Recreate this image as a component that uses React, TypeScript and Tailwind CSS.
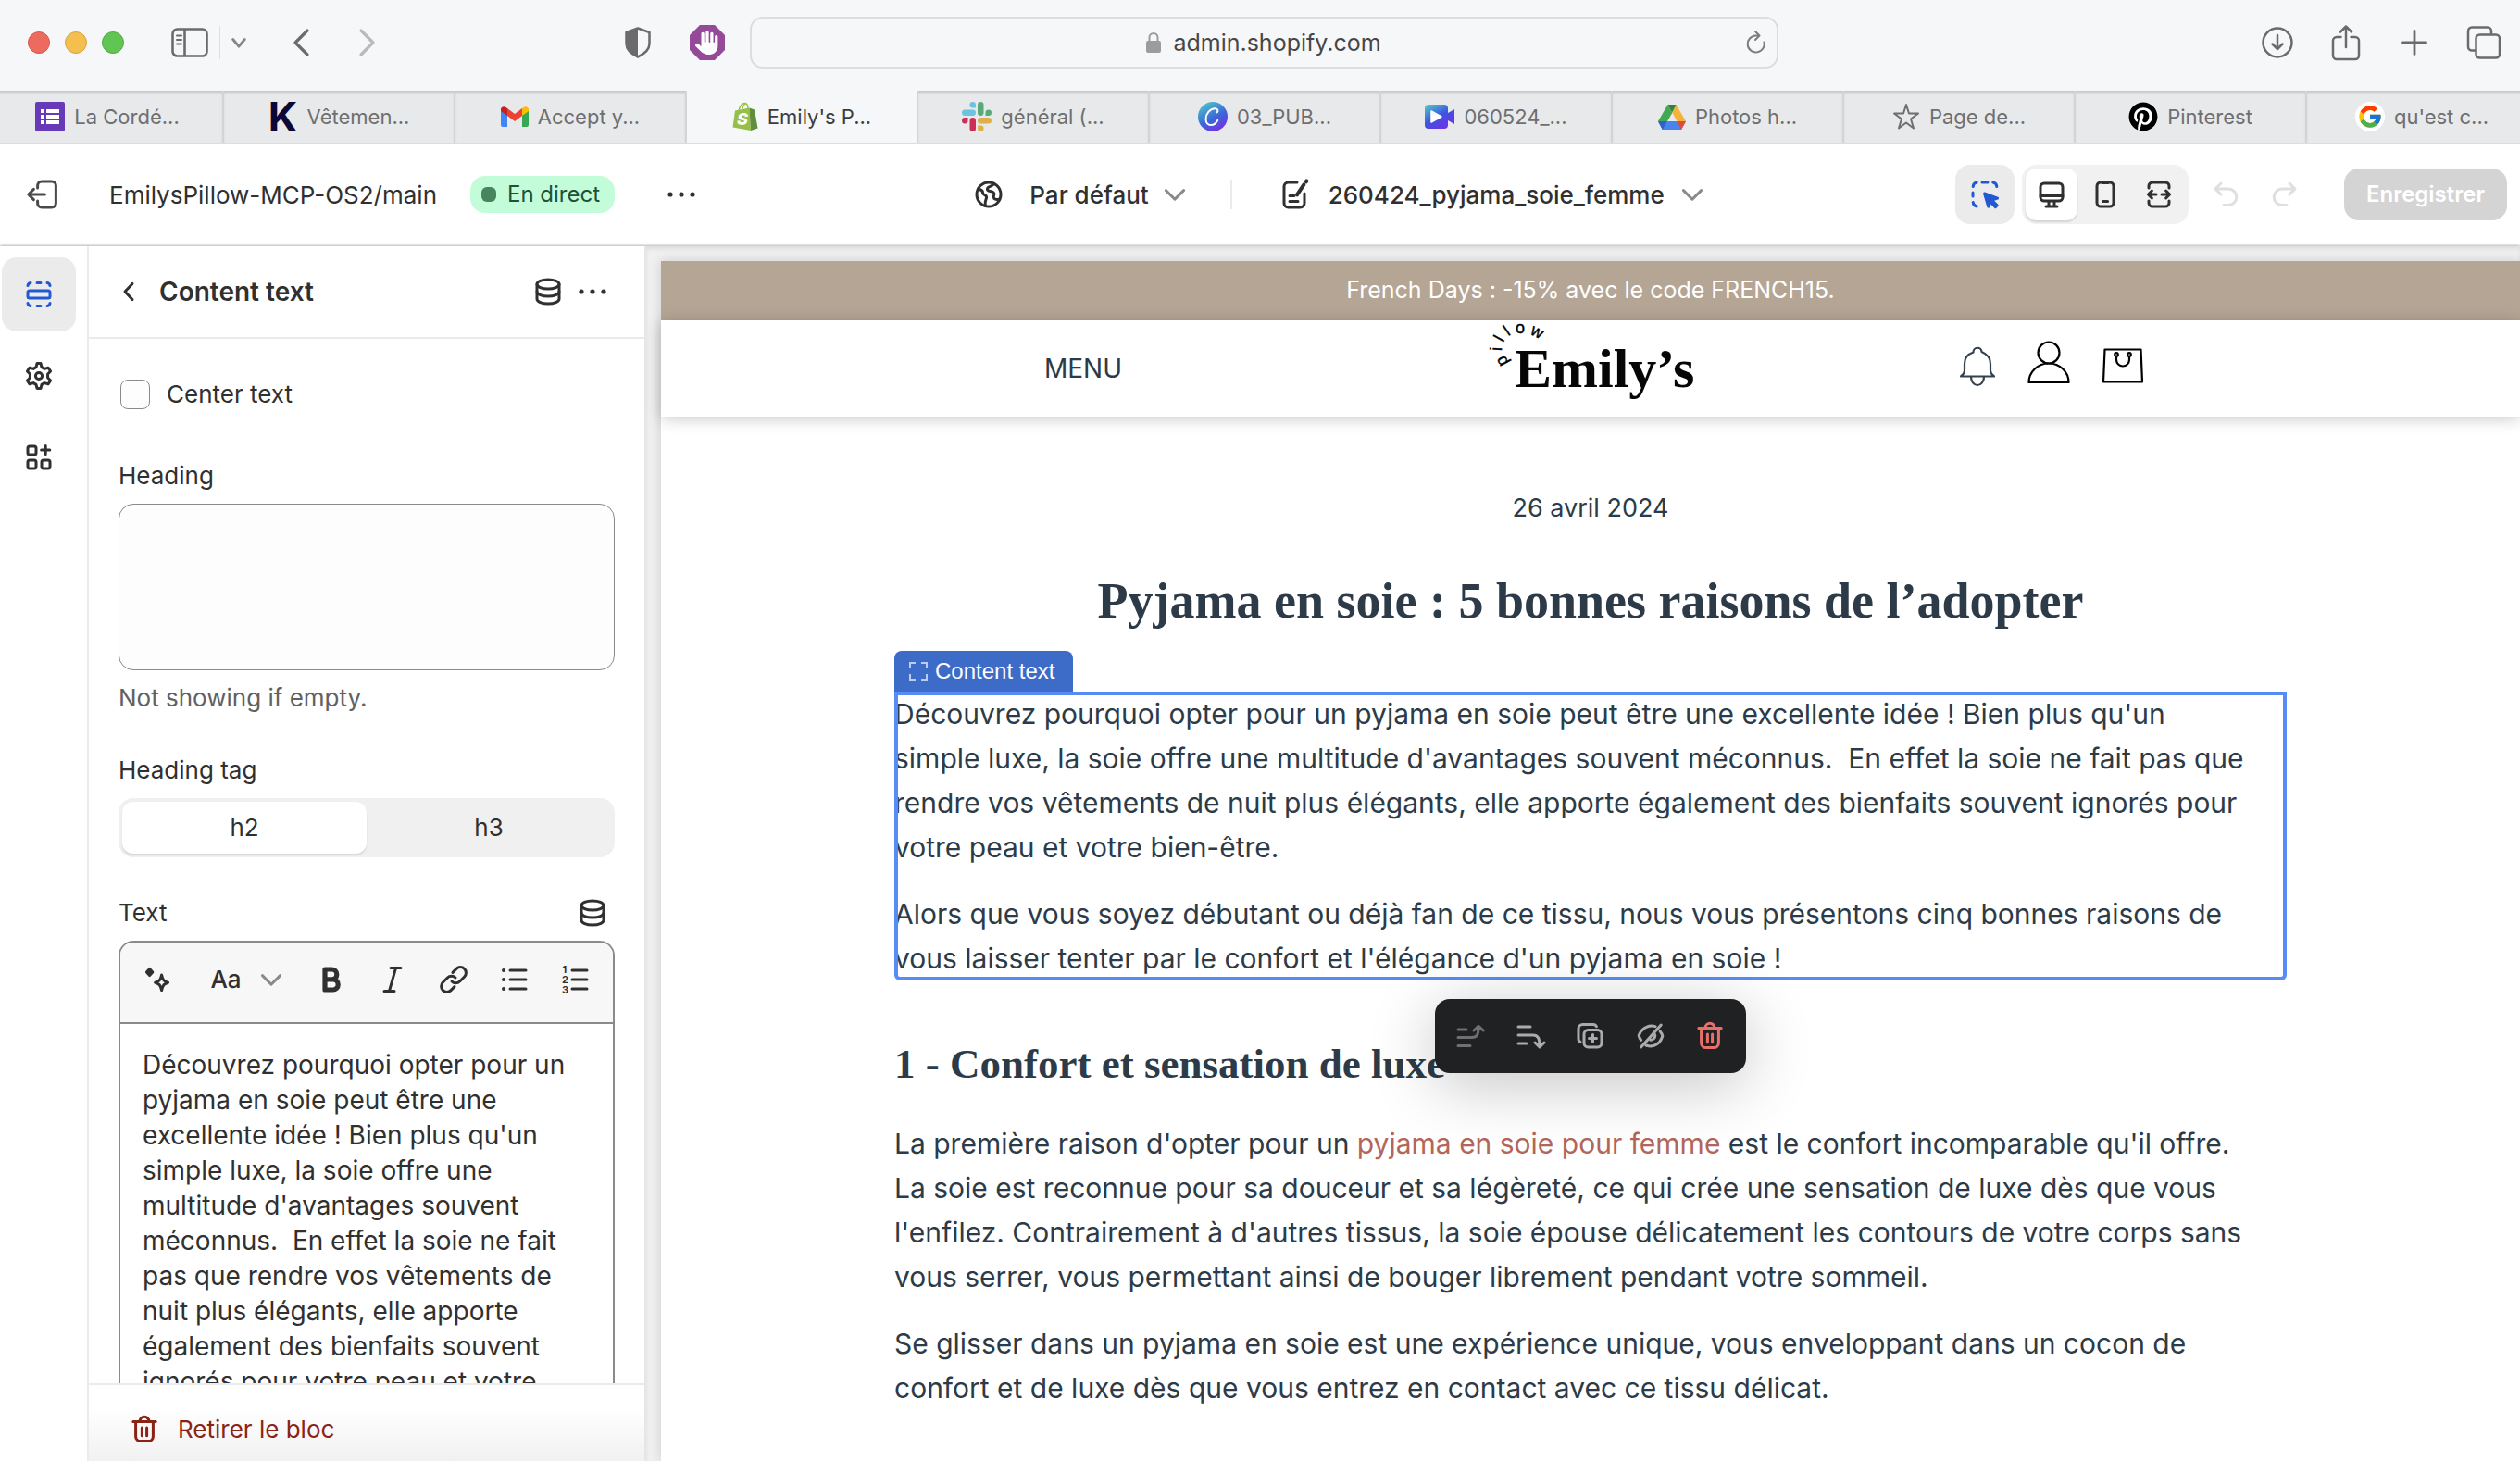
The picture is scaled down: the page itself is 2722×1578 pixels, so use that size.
import type { ReactNode } from "react";
import { FcGoogle } from "react-icons/fc";
import { FaHand, FaPinterest } from "react-icons/fa6";

function Icon({ children, className = "size-10", width = 1.5 }: { children: ReactNode; className?: string; width?: number }) {
  return (
    <svg
      viewBox="0 0 20 20"
      fill="none"
      stroke="currentColor"
      strokeWidth={width}
      strokeLinecap="round"
      strokeLinejoin="round"
      aria-hidden="true"
      className={"shrink-0 " + className}
    >
      {children}
    </svg>
  );
}

/* ---------- Generic icons ---------- */

const Dots = () => (
  <Icon>
    <g fill="currentColor" stroke="none">
      <circle cx="4" cy="10" r="1.3" />
      <circle cx="10" cy="10" r="1.3" />
      <circle cx="16" cy="10" r="1.3" />
    </g>
  </Icon>
);

const ChevronDown = () => (
  <Icon className="size-10 text-[#8a8a8a]">
    <path d="M5.2 7.8 10 12.6l4.8-4.8" />
  </Icon>
);

const Database = () => (
  <Icon>
    <ellipse cx="10" cy="6" rx="6" ry="2.5" />
    <path d="M4 6v8c0 1.4 2.7 2.5 6 2.5s6-1.1 6-2.5V6" />
    <path d="M4 10c0 1.4 2.7 2.5 6 2.5s6-1.1 6-2.5" />
  </Icon>
);

const Trash = () => (
  <Icon>
    <path d="M3.9 5.7h12.2M7.6 5.5a2.4 2.4 0 0 1 4.8 0M5.3 5.9v7.8a2.6 2.6 0 0 0 2.6 2.6h4.2a2.6 2.6 0 0 0 2.6-2.6V5.9M8.7 9v4.4M11.3 9v4.4" />
  </Icon>
);

/* ---------- Browser chrome ---------- */

function BrowserBar() {
  return (
    <header className="flex h-[98px] shrink-0 items-center bg-[#f6f7f9] pb-1.5 text-[#6b6b6d]">
      <div className="flex w-[783px] shrink-0 items-center pl-[30px]">
        <div className="flex gap-4">
          <button aria-label="Fermer" className="size-6 rounded-full border border-[#d8574c] bg-[#ed6a5e]" />
          <button aria-label="Réduire" className="size-6 rounded-full border border-[#d9a33c] bg-[#f5bf4f]" />
          <button aria-label="Agrandir" className="size-6 rounded-full border border-[#4fab42] bg-[#61c554]" />
        </div>
        <button aria-label="Barre latérale" className="ml-[51px]">
          <svg viewBox="0 0 40 32" className="h-8 w-10" fill="none" stroke="currentColor" strokeWidth="2.6" aria-hidden="true">
            <rect x="1.5" y="1.5" width="37" height="29" rx="5" />
            <path d="M14.5 2v28" />
            <path d="M6 8.5h5M6 13h5M6 17.5h5" strokeWidth="2" strokeLinecap="round" />
          </svg>
        </button>
        <span className="ml-3 h-9 w-px bg-[#dfe0e2]" />
        <button aria-label="Groupes d'onglets" className="ml-1.5">
          <Icon className="size-7 text-[#858587]" width={2}>
            <path d="M5.5 7.5 10 13l4.5-5.5" />
          </Icon>
        </button>
        <button aria-label="Précédent" className="ml-[34px]">
          <svg viewBox="0 0 40 40" className="size-10" fill="none" stroke="currentColor" strokeWidth="3.2" strokeLinecap="round" strokeLinejoin="round" aria-hidden="true">
            <path d="M26 7 13 20l13 13" />
          </svg>
        </button>
        <button aria-label="Suivant" className="ml-[30px] text-[#b9babc]">
          <svg viewBox="0 0 40 40" className="size-10" fill="none" stroke="currentColor" strokeWidth="3.2" strokeLinecap="round" strokeLinejoin="round" aria-hidden="true">
            <path d="M14 7l13 13-13 13" />
          </svg>
        </button>
        <button aria-label="Rapport de confidentialité" className="ml-auto">
          <svg viewBox="0 0 28 34" className="h-[34px] w-7" aria-hidden="true">
            <path d="M14 1.5 26.5 6v12c0 7-6 11.500-12.500 14.500C7.500 29.500 1.500 25 1.500 18V6Z" fill="none" stroke="currentColor" strokeWidth="2.5" strokeLinejoin="round" />
            <path d="M14 1.5v31C7.500 29.500 1.500 25 1.500 18V6Z" fill="currentColor" />
          </svg>
        </button>
        <button aria-label="Bloqueur de contenu" className="ml-[42px] grid place-items-center">
          <svg viewBox="0 0 38 38" className="col-start-1 row-start-1 size-[38px]" aria-hidden="true">
            <path d="M11 0h16l11 11v16L27 38H11L0 27V11Z" fill="#944a98" />
          </svg>
          <FaHand className="col-start-1 row-start-1 size-[26px] text-white" aria-hidden="true" />
        </button>
      </div>
      <div className="ml-[27px] flex h-[56px] flex-1 items-center rounded-[14px] border-2 border-[#dcdddf]">
        <label className="flex flex-1 items-center justify-center gap-3 pl-8">
          <svg viewBox="0 0 18 24" className="h-6 w-[18px] text-[#9c9c9c]" aria-hidden="true">
            <rect x="1" y="10" width="16" height="13" rx="2" fill="currentColor" />
            <path d="M4.500 11V6.500a4.500 4.500 0 0 1 9 0V11" fill="none" stroke="currentColor" strokeWidth="2" />
          </svg>
          <input aria-label="Adresse" defaultValue="admin.shopify.com" className="bg-transparent text-[25px] leading-8 text-[#464648] outline-none [field-sizing:content]" />
        </label>
        <button aria-label="Recharger" className="pr-2.5">
          <svg viewBox="0 0 24 26" className="h-[26px] w-6" fill="none" stroke="#7d7d7f" strokeWidth="2" strokeLinecap="round" strokeLinejoin="round" aria-hidden="true">
            <path d="M20.500 12.500A9 9 0 1 1 11.500 5.500h3.500M11 1l4.500 4.500L11 10" />
          </svg>
        </button>
      </div>
      <div className="ml-[521px] flex shrink-0 items-center gap-[38px] pr-5">
        <button aria-label="Téléchargements">
          <svg viewBox="0 0 36 36" className="size-9" fill="none" stroke="currentColor" strokeWidth="2.5" strokeLinecap="round" strokeLinejoin="round" aria-hidden="true">
            <circle cx="18" cy="18" r="15.5" />
            <path d="M18 10v15M12.500 19.500 18 25l5.500-5.500" />
          </svg>
        </button>
        <button aria-label="Partager">
          <svg viewBox="0 0 36 40" className="h-10 w-9" fill="none" stroke="currentColor" strokeWidth="2.5" strokeLinecap="round" strokeLinejoin="round" aria-hidden="true">
            <path d="M12.500 14H8a4 4 0 0 0-4 4v16a4 4 0 0 0 4 4h20a4 4 0 0 0 4-4V18a4 4 0 0 0-4-4h-4.500M18 25V2.500M12 8.500l6-6 6 6" />
          </svg>
        </button>
        <button aria-label="Nouvel onglet">
          <svg viewBox="0 0 36 36" className="size-9" fill="none" stroke="currentColor" strokeWidth="2.8" strokeLinecap="round" aria-hidden="true">
            <path d="M18 5.500v25M5.500 18h25" />
          </svg>
        </button>
        <button aria-label="Vue d'ensemble des onglets">
          <svg viewBox="0 0 38 36" className="h-9 w-[38px]" fill="none" stroke="currentColor" strokeWidth="2.5" strokeLinejoin="round" aria-hidden="true">
            <path d="M10 26.500H6a4 4 0 0 1-4-4V5.500a4 4 0 0 1 4-4h17a4 4 0 0 1 4 4V9" />
            <rect x="10.5" y="9.5" width="25.5" height="25" rx="4" />
          </svg>
        </button>
      </div>
    </header>
  );
}

const FormsLogo = () => (
  <svg viewBox="0 0 32 32" className="size-8" aria-hidden="true">
    <rect width="32" height="32" rx="2" fill="#673ab7" />
    <g fill="#fff">
      <rect x="6" y="8" width="4" height="4" /><rect x="12" y="8" width="14" height="4" />
      <rect x="6" y="14" width="4" height="4" /><rect x="12" y="14" width="14" height="4" />
      <rect x="6" y="20" width="4" height="4" /><rect x="12" y="20" width="14" height="4" />
    </g>
  </svg>
);

const KLogo = () => (
  <span className="grid size-8 place-items-center text-[44px] leading-8 font-bold text-[#0b0737]" aria-hidden="true">K</span>
);

const GmailLogo = () => (
  <svg viewBox="0 0 30 22" className="h-[22px] w-[30px]" aria-hidden="true">
    <path d="M0 4v16a2 2 0 0 0 2 2h5V9Z" fill="#4285f4" />
    <path d="M30 4v16a2 2 0 0 1-2 2h-5V9Z" fill="#34a853" />
    <path d="M7 2v8l8 6 8-6V2l-8 6Z" fill="#ea4335" />
    <path d="M0 3v2l7 5V2L5.500.900C3.200-.800 0 .600 0 3Z" fill="#c5221f" />
    <path d="M30 3v2l-7 5V2L24.500.900C26.800-.800 30 .600 30 3Z" fill="#fbbc04" />
  </svg>
);

const ShopifyLogo = () => (
  <svg viewBox="0 0 28 32" className="h-8 w-7" aria-hidden="true">
    <path d="M7 10C8 4 11 1 14 1.500c2.500.500 3 3 3 6M10.500 9c.500-4.500 3-7 5-7.200" fill="none" stroke="#95bf47" strokeWidth="1.4" />
    <path d="M3 9.500 18.500 6.500 20 31 .500 27.500Z" fill="#95bf47" />
    <path d="M18.500 6.500 24 8.500l3.500 20L20 31Z" fill="#5e8e3e" />
    <text x="5" y="25" fontSize="18" fontWeight="800" fontStyle="italic" fontFamily="Inter, sans-serif" fill="#fff">S</text>
  </svg>
);

const SlackLogo = () => (
  <svg viewBox="0 0 32 32" className="size-8" aria-hidden="true">
    <g fill="#6ec2df">
      <rect x="0" y="8.5" width="15" height="6.5" rx="3.25" />
      <path d="M11.700 0a3.250 3.250 0 0 1 3.250 3.250V6.500H11.700a3.250 3.250 0 0 1 0-6.500Z" />
    </g>
    <g fill="#57ab78">
      <rect x="17" y="0" width="6.5" height="15" rx="3.25" />
      <path d="M32 11.700a3.250 3.250 0 0 1-3.250 3.250H25.500V11.700a3.250 3.250 0 0 1 6.500 0Z" />
    </g>
    <g fill="#deb04c">
      <rect x="17" y="17" width="15" height="6.5" rx="3.25" />
      <path d="M20.300 32a3.250 3.250 0 0 1-3.250-3.250V25.500h3.250a3.250 3.250 0 0 1 0 6.500Z" />
    </g>
    <g fill="#cb2e56">
      <rect x="8.5" y="17" width="6.5" height="15" rx="3.25" />
      <path d="M0 20.300a3.250 3.250 0 0 1 3.250-3.250H6.500v3.250a3.250 3.250 0 0 1-6.500 0Z" />
    </g>
  </svg>
);

const CanvaLogo = () => (
  <svg viewBox="0 0 32 32" className="size-8" aria-hidden="true">
    <defs>
      <linearGradient id="canva" x1="0.2" y1="0" x2="0.75" y2="1">
        <stop offset="0" stopColor="#4fc6c9" />
        <stop offset="0.55" stopColor="#3b68d8" />
        <stop offset="1" stopColor="#7a2be8" />
      </linearGradient>
    </defs>
    <circle cx="16" cy="16" r="16" fill="url(#canva)" />
    <path d="M20.500 11.500c1.500-1 1.300-4-1.800-4.300C13 7 8.500 13 8.500 18.500c0 4 2.300 6.500 5.500 6.500 3 0 5.700-2 7.200-5" fill="none" stroke="#fff" strokeWidth="2" strokeLinecap="round" />
  </svg>
);

const VideoLogo = () => (
  <svg viewBox="0 0 32 26" className="h-[26px] w-8" aria-hidden="true">
    <defs>
      <linearGradient id="video" x1="0.1" y1="0" x2="0.8" y2="1">
        <stop offset="0" stopColor="#4fc6c9" />
        <stop offset="0.5" stopColor="#3d53e0" />
        <stop offset="1" stopColor="#7a2be8" />
      </linearGradient>
    </defs>
    <path d="M4 0h17a4 4 0 0 1 4 4v5l7-4v16l-7-4v5a4 4 0 0 1-4 4H4a4 4 0 0 1-4-4V4a4 4 0 0 1 4-4Z" fill="url(#video)" />
    <path d="M7 7v12l11-6Z" fill="#fff" stroke="#fff" strokeWidth="1.5" strokeLinejoin="round" />
  </svg>
);

const DriveLogo = () => (
  <svg viewBox="0 0 30 27" className="h-[27px] w-[30px]" aria-hidden="true">
    <path d="M10.500 0 0 18l4.800 9 10.400-18Z" fill="#43a853" />
    <path d="M10.500 0h9L30 18h-9.500Z" fill="#f4b33a" />
    <path d="M10.500 0h9l-4.500 8.500Z" fill="#2c8440" />
    <path d="M0 18h30l-5 9H4.800Z" fill="#4b83ee" />
    <path d="M0 18h9.600L4.800 27Z" fill="#2d62cd" />
    <path d="M20.500 18H30l-5 9Z" fill="#e14a37" />
  </svg>
);

const StarIcon = () => (
  <svg viewBox="0 0 30 30" className="size-[30px]" fill="none" stroke="#6e6f71" strokeWidth="2" strokeLinejoin="round" aria-hidden="true">
    <path d="M15 2 18 11.500h10l-8 6 3 10-8-6-8 6 3-10-8-6H12Z" />
  </svg>
);

const PinterestLogo = () => (
  <span className="rounded-full bg-white"><FaPinterest className="size-8 text-black" aria-hidden="true" /></span>
);

const GoogleLogo = () => (
  <span className="grid size-8 place-items-center rounded-full bg-white"><FcGoogle className="size-7" aria-hidden="true" /></span>
);

const tabs: { label: string; icon: ReactNode; active?: boolean }[] = [
  { label: "La Cordé...", icon: <FormsLogo /> },
  { label: "Vêtemen...", icon: <KLogo /> },
  { label: "Accept y...", icon: <GmailLogo /> },
  { label: "Emily's P...", icon: <ShopifyLogo />, active: true },
  { label: "général (...", icon: <SlackLogo /> },
  { label: "03_PUB...", icon: <CanvaLogo /> },
  { label: "060524_...", icon: <VideoLogo /> },
  { label: "Photos h...", icon: <DriveLogo /> },
  { label: "Page de...", icon: <StarIcon /> },
  { label: "Pinterest", icon: <PinterestLogo /> },
  { label: "qu'est c...", icon: <GoogleLogo /> },
];

function TabStrip() {
  return (
    <nav aria-label="Onglets" className="h-[58px] shrink-0 overflow-hidden border-b-2 border-[#dcdddf]">
      <div className="-mr-5 -ml-2 flex h-full">
        {tabs.map((tab) => (
          <button
            key={tab.label}
            className={
              tab.active
                ? "flex flex-1 items-center justify-center gap-2.5 border-r-2 border-[#d3d4d6] bg-[#f6f7f9] text-[22px] text-[#3c3c3e]"
                : "flex flex-1 items-center justify-center gap-2.5 border-r-2 border-[#d3d4d6] bg-[#e8e9eb] text-[22px] text-[#6e6f71] shadow-[inset_0_3px_3px_-1px_#c4c5c7]"
            }
          >
            {tab.icon}
            {tab.label}
          </button>
        ))}
      </div>
    </nav>
  );
}

/* ---------- Theme editor ---------- */

function EditorHeader() {
  return (
    <header className="flex h-[110px] shrink-0 items-center justify-between bg-white pr-3.5 pb-0.5 pl-[26px] text-[#303030]">
      <div className="flex items-center">
        <button aria-label="Quitter" className="text-[#4a4a4a]">
          <Icon>
            <path d="M7.3 6.5V5.3A2.3 2.3 0 0 1 9.6 3h5.3a2.3 2.3 0 0 1 2.3 2.3v9.4a2.3 2.3 0 0 1-2.3 2.3H9.6a2.3 2.3 0 0 1-2.3-2.3v-1.2M11.2 10H2.6M5.2 7.2 2.400 10l2.800 2.800" />
          </Icon>
        </button>
        <h1 className="ml-[52px] text-[26px]">EmilysPillow-MCP-OS2/main</h1>
        <span className="ml-9 flex h-10 items-center gap-3 rounded-2xl bg-[#c3fcd8] px-3 text-2xl text-[#1d5238]">
          <span className="size-4 rounded-[6px] bg-[#47855f]" />
          <span className="pr-1">En direct</span>
        </span>
        <button aria-label="Plus d'actions" className="ml-10 grid size-16 place-items-center"><Dots /></button>
      </div>
      <div className="ml-4 flex items-center text-[26px] font-medium">
        <button className="flex items-center gap-6">
          <Icon>
            <circle cx="10" cy="10" r="6.5" />
            <path d="M4.300 7.300c2 0 2.500 1 2.500 2s2 .700 2 2.200-1.200 1.500-.600 4.600M12.800 4.200c-.800 1.800-3.600 1.200-3.600 2.900 0 1.600 2.800.700 3.600 2.100.700 1.200-.900 2 .100 3 .800.800 1.700.400 2.500.500" />
          </Icon>
          <span className="flex items-center gap-2">Par défaut <ChevronDown /></span>
        </button>
        <span className="mr-12 ml-10 h-8 w-0.5 bg-[#ebebeb]" />
        <button className="flex items-center gap-4">
          <Icon>
            <path d="M11 3.500H6.300A2.300 2.300 0 0 0 4 5.800v8.900A2.300 2.300 0 0 0 6.300 17h6.400a2.300 2.300 0 0 0 2.300-2.300V9.500M7 10.800h2.500M7 13.700h4.500" />
            <path d="m15.900 3.200.3-.5" strokeWidth="2" />
            <path d="m11 10.200 3.700-5.500" strokeWidth="2" />
          </Icon>
          <span className="flex items-center gap-2.5">260424_pyjama_soie_femme <ChevronDown /></span>
        </button>
      </div>
      <div className="flex items-center">
        <button aria-label="Inspecteur" aria-pressed="true" className="grid size-16 place-items-center rounded-2xl bg-[#ebebeb] text-[#2259d2]">
          <Icon>
            <path d="M3.600 5.800a2.500 2.500 0 0 1 2-2.300M3.500 9v2M3.600 14.200a2.500 2.500 0 0 0 2 2.300M8.500 3.500h3M14.400 3.500a2.500 2.500 0 0 1 2 2.300" />
            <path d="m9.800 9.500 7 2.600-3 1 2.800 2.800-.9.900-2.800-2.800-1 2.600Z" fill="currentColor" />
          </Icon>
        </button>
        <div className="ml-2 flex gap-0.5 rounded-2xl bg-[#f1f1f1] p-1">
          <button aria-label="Ordinateur" aria-pressed="true" className="grid size-14 place-items-center rounded-xl bg-white shadow-[0_2px_2px_rgba(0,0,0,0.12)]">
            <Icon>
              <rect x="4" y="4" width="12" height="9.5" rx="2" />
              <path d="M4 10.700h12M8.500 13.800v2.400M11.500 13.800v2.400M7 16.500h6" />
            </Icon>
          </button>
          <button aria-label="Mobile" className="grid size-14 place-items-center">
            <Icon>
              <rect x="5.5" y="3.5" width="9" height="13" rx="2" />
              <path d="M8.700 13.700h2.600M8.500 3.800h3" />
            </Icon>
          </button>
          <button aria-label="Plein écran" className="grid size-14 place-items-center">
            <Icon>
              <path d="M4.500 6.500v-1a2 2 0 0 1 2-2h7a2 2 0 0 1 2 2v1M4.500 13.500v1a2 2 0 0 0 2 2h7a2 2 0 0 0 2-2v-1M4.300 10h4.200M11.500 10h4.200M6.200 8l-2 2 2 2M13.800 8l2 2-2 2" />
            </Icon>
          </button>
        </div>
        <button aria-label="Annuler" disabled className="ml-5 text-[#dfdfdf]">
          <Icon><path d="M7.500 4 4.500 7l3 3M5 7h6.500a3.900 3.900 0 0 1 0 8.800H9" /></Icon>
        </button>
        <button aria-label="Rétablir" disabled className="ml-6 text-[#dfdfdf]">
          <Icon><path d="m12.500 4 3 3-3 3M15 7H8.500a3.900 3.900 0 0 0 0 8.800H11" /></Icon>
        </button>
        <button disabled className="ml-11 h-14 rounded-2xl bg-[#d4d4d4] px-6 text-2xl font-semibold text-white">Enregistrer</button>
      </div>
    </header>
  );
}

function Rail() {
  return (
    <nav aria-label="Sections" className="flex w-24 shrink-0 flex-col gap-2 border-r-2 border-[#ebebeb] px-0.5 pt-3 text-[#303030]">
      <button aria-label="Sections" aria-pressed="true" className="grid size-20 place-items-center rounded-2xl bg-[#ebebeb] text-[#2259d2]">
        <Icon>
          <rect x="4" y="8" width="12" height="4" rx="1" />
          <path d="M4 5.300a1.800 1.800 0 0 1 1.500-1.600M9 3.700h2M14.500 3.700A1.800 1.800 0 0 1 16 5.300M4 14.700a1.800 1.800 0 0 0 1.500 1.600M9 16.300h2M14.500 16.300a1.800 1.800 0 0 0 1.500-1.600" />
        </Icon>
      </button>
      <button aria-label="Paramètres du thème" className="grid size-20 place-items-center">
        <Icon>
          <circle cx="10" cy="10" r="1.8" />
          <path d="M9 3.300h2l.5 2 1.500.900 2-.600 1.300 1.900-1.500 1.500v2l1.500 1.500-1.300 1.900-2-.600-1.500.900-.5 2H9l-.5-2-1.500-.900-2 .600-1.300-1.900L5.200 11V9L3.700 7.500 5 5.600l2 .600 1.500-.900Z" />
        </Icon>
      </button>
      <button aria-label="Applications" className="grid size-20 place-items-center">
        <Icon>
          <rect x="4" y="4" width="4.5" height="4.5" rx="1" />
          <rect x="4" y="11.5" width="4.5" height="4.5" rx="1" />
          <rect x="11.5" y="11.5" width="4.5" height="4.5" rx="1" />
          <path d="M13.600 3.700v4.600M11.300 6h4.600" />
        </Icon>
      </button>
    </nav>
  );
}

const editorText =
  "Découvrez pourquoi opter pour un pyjama en soie peut être une excellente idée ! Bien plus qu'un simple luxe, la soie offre une multitude d'avantages souvent méconnus.  En effet la soie ne fait pas que rendre vos vêtements de nuit plus élégants, elle apporte également des bienfaits souvent ignorés pour votre peau et votre bien-être.";

const tool = "grid h-14 w-14 place-items-center";

function SettingsPanel() {
  return (
    <aside className="flex w-[602px] shrink-0 flex-col border-r-2 border-[#e6e6e6] text-[26px] leading-10 text-[#303030]">
      <div className="flex h-[100px] shrink-0 items-center border-b-2 border-[#ebebeb] pr-9 pl-6">
        <button aria-label="Retour">
          <Icon><path d="M11.500 5.700 7.500 10l4 4.300" /></Icon>
        </button>
        <h2 className="ml-3 flex-1 text-[28px] font-semibold">Content text</h2>
        <button aria-label="Source dynamique" className="mr-2"><Database /></button>
        <button aria-label="Plus d'actions"><Dots /></button>
      </div>

      <div className="min-h-0 flex-1 overflow-hidden px-8 pt-10">
        <label className="flex items-center gap-[18px] pl-0.5">
          <input type="checkbox" className="size-8 appearance-none rounded-lg border border-[#8a8a8a] bg-[#fdfdfd]" />
          Center text
        </label>

        <label htmlFor="heading" className="mt-12 block">Heading</label>
        <textarea id="heading" className="mt-2.5 block h-[180px] w-full resize-none rounded-2xl border border-[#8a8a8a] bg-[#fdfdfd] px-6 py-3" />
        <p className="mt-2.5 text-[#616161]">Not showing if empty.</p>

        <p id="heading-tag" className="mt-[38px]">Heading tag</p>
        <div role="group" aria-labelledby="heading-tag" className="mt-2.5 grid grid-cols-2 rounded-2xl bg-[#f0f0f0] p-1">
          <button aria-pressed="true" className="h-14 rounded-xl bg-white shadow-[0_2px_2px_rgba(0,0,0,0.1)]">h2</button>
          <button aria-pressed="false" className="h-14">h3</button>
        </div>

        <div className="mt-10 flex items-center justify-between pr-1">
          <label htmlFor="text">Text</label>
          <button aria-label="Source dynamique"><Database /></button>
        </div>
        <div className="mt-2.5 overflow-hidden rounded-t-2xl border-2 border-b-0 border-[#8a8a8a]">
          <div role="toolbar" aria-label="Mise en forme" className="flex h-[88px] items-center justify-between border-b-2 border-[#8a8a8a] bg-[#f7f7f7] px-3 pb-1.5">
            <button aria-label="Générer le texte" className={tool}>
              <Icon>
                <path d="M12.300 7.500c.6 2.700 1.300 3.500 3.500 4.100-2.200.600-2.900 1.500-3.500 4.200-.600-2.700-1.300-3.600-3.500-4.200 2.200-.600 2.900-1.400 3.500-4.100Z" />
                <path d="M5.800 4.200 7.400 6 5.800 7.800 4.200 6Z" fill="currentColor" />
              </Icon>
            </button>
            <button aria-label="Format" className="flex w-28 items-center justify-center gap-3 pl-3">
              <span className="font-medium">Aa</span><ChevronDown />
            </button>
            <button aria-label="Gras" className={tool}>
              <Icon width={2.6}><path d="M6.500 4.500h3.700a2.700 2.700 0 0 1 0 5.400H6.500h4.300a2.800 2.800 0 0 1 0 5.600H6.500Z" /></Icon>
            </button>
            <button aria-label="Italique" className={tool}>
              <Icon><path d="M9 3.700h5.500M5.500 16.300H11M11.800 3.700 8.200 16.300" /></Icon>
            </button>
            <button aria-label="Lien" className={tool}>
              <Icon><path d="M9.500 6.200l2-2a3 3 0 0 1 4.300 4.300l-2.500 2.500a3 3 0 0 1-4.300 0M10.500 13.800l-2 2a3 3 0 0 1-4.300-4.300L6.700 9a3 3 0 0 1 4.300 0" /></Icon>
            </button>
            <button aria-label="Liste à puces" className={tool}>
              <Icon>
                <path d="M7.500 5h8.500M7.500 10h8.500M7.500 15h8.500" />
                <path d="M4 5h.01M4 10h.01M4 15h.01" strokeWidth="2" />
              </Icon>
            </button>
            <button aria-label="Liste numérotée" className={tool}>
              <Icon>
                <path d="M8 5h8M8 10h8M8 15h8" />
                <g fill="currentColor" stroke="none" fontSize="5.5" fontWeight="700" fontFamily="Inter, sans-serif">
                  <text x="2.8" y="6.5">1</text>
                  <text x="2.5" y="12">2</text>
                  <text x="2.5" y="17.5">3</text>
                </g>
              </Icon>
            </button>
          </div>
          <textarea
            id="text"
            rows={12}
            defaultValue={editorText}
            className="block w-full resize-none overflow-hidden bg-white px-6 py-[25px] text-[28px] leading-[38px] outline-none"
          />
        </div>
      </div>

      <div className="flex h-[84px] shrink-0 items-center border-t-2 border-[#ebebeb] bg-linear-to-b from-white from-30% to-[#f1f1f1] px-10 pt-3.5 text-[#8a2313]">
        <button className="flex items-center gap-4"><Trash />Retirer le bloc</button>
      </div>
    </aside>
  );
}

/* ---------- Store preview ---------- */

function EmilysLogo() {
  const letters = [
    { c: "p", x: 13, y: 40, r: -118 },
    { c: "i", x: 7, y: 27, r: -87 },
    { c: "l", x: 10, y: 16, r: -61 },
    { c: "l", x: 18, y: 8, r: -35 },
    { c: "o", x: 32, y: 5, r: 0 },
    { c: "w", x: 50, y: 9, r: 27 },
  ];
  return (
    <svg viewBox="0 -4 224 104" className="h-[104px] w-[224px] overflow-visible" role="img" aria-label="Emily's Pillow">
      <g fontFamily="'Liberation Sans', sans-serif" fontSize="18" fill="#000" stroke="#000" strokeWidth="0.4" textAnchor="middle">
        {letters.map((l, i) => (
          <text key={i} transform={`translate(${l.x} ${l.y}) rotate(${l.r})`} y="5">{l.c}</text>
        ))}
      </g>
      <text x="26" y="68" fontFamily="'Liberation Serif', serif" fontSize="60" fontWeight="700" fill="#060606">Emily’s</text>
    </svg>
  );
}

function StoreHeader() {
  return (
    <>
      <div className="flex h-16 items-center justify-center bg-[#b5a594] text-[25px] text-white">
        French Days : -15% avec le code FRENCH15.
      </div>
      <div className="h-[104px] bg-white shadow-[0_2px_16px_rgba(0,0,0,0.22)]">
        <div className="mx-auto grid h-full max-w-[1196px] grid-cols-3 items-center pl-2">
          <button className="justify-self-start text-[28px]">MENU</button>
          <a href="#accueil" className="justify-self-center"><EmilysLogo /></a>
          <div className="flex items-center gap-[34px] justify-self-end pb-1.5">
            <button aria-label="Notifications">
              <svg viewBox="0 0 40 46" className="h-[46px] w-10" fill="none" stroke="#34424f" strokeWidth="2.2" strokeLinejoin="round" aria-hidden="true">
                <path d="M15.500 8.500a4.500 4.500 0 0 1 9-.500c6 2.500 9.500 7 9.500 13v7.500c0 2 2 4.500 4 6H2c2-1.500 4-4 4-6V21c0-6 3.500-10.500 9.500-12.500ZM13 35a7 9 0 0 0 14 0" />
              </svg>
            </button>
            <button aria-label="Compte" className="pb-2">
              <svg viewBox="0 0 46 46" className="size-[46px]" fill="none" stroke="#000" strokeWidth="2.2" strokeLinejoin="round" aria-hidden="true">
                <circle cx="23" cy="13" r="11.5" />
                <path d="M1.500 45a21.500 20.500 0 0 1 43 0Z" />
              </svg>
            </button>
            <button aria-label="Panier">
              <svg viewBox="0 0 46 38" className="h-[38px] w-[46px]" fill="none" stroke="#000" strokeWidth="2.2" strokeLinejoin="round" aria-hidden="true">
                <path d="M3.500 1.500h39l1.500 35H2Z" />
                <circle cx="16" cy="7" r="1.8" />
                <circle cx="30" cy="7" r="1.8" />
                <path d="M16 9v3.500a7 7 0 0 0 14 0V9" />
              </svg>
            </button>
          </div>
        </div>
      </div>
    </>
  );
}

function BlockToolbar() {
  return (
    <div role="toolbar" aria-label="Actions du bloc" className="absolute top-full left-1/2 mt-5 flex h-20 w-[336px] -translate-x-1/2 items-center justify-between rounded-2xl bg-[#202123] px-[19px] text-[#a9abad] shadow-[0_12px_70px_rgba(0,0,0,0.24)]">
      <button aria-label="Monter" disabled className="text-[#6f7072]">
        <Icon><path d="M3 6.500h4.500M3 10.700h7.500c2.500 0 3.500-1.200 3.500-5.500M3 15.200h6.500M11.500 7 14 4.700 16.600 7" /></Icon>
      </button>
      <button aria-label="Descendre">
        <Icon><path d="M3 5h6.500M3 9.500h8c2.500 0 3.500 1.500 3.500 6M3 14h4.500M12 13.500l2.500 2.400 2.500-2.400" /></Icon>
      </button>
      <button aria-label="Dupliquer">
        <Icon>
          <path d="M4.500 13.200a2 2 0 0 1-1-1.900V6a2.300 2.300 0 0 1 2.300-2.300h5.500a2 2 0 0 1 1.900 1.100" />
          <rect x="6.5" y="6.7" width="9.5" height="9.3" rx="2.2" />
          <path d="M11.250 9.300v4M9.250 11.300h4" />
        </Icon>
      </button>
      <button aria-label="Masquer">
        <Icon>
          <path d="M12.500 4.800C8 3.700 4.800 6.500 3.600 9.700c.2 1 .6 1.700 1.200 2.500M7.500 15c4 1.500 7.600-.800 8.900-5-.2-.9-.6-1.700-1.300-2.500M4.800 16 15.600 4M12.300 9.300a2.300 2.300 0 0 1-2.400 2.800" />
        </Icon>
      </button>
      <button aria-label="Supprimer" className="text-[#e8706b]"><Trash /></button>
    </div>
  );
}

function Preview() {
  return (
    <main className="min-w-0 flex-1 overflow-hidden bg-[#f0f0f0] pt-4 pl-4 shadow-[inset_0_3px_4px_rgba(0,0,0,0.08)]">
      <div className="h-full bg-white text-[#2d3b48] shadow-[0_0_12px_rgba(0,0,0,0.15)]">
        <StoreHeader />
        <article className="mx-auto w-[1504px] max-w-full pt-[75px] text-[30px] leading-[48px]">
          <p className="text-center text-[27px]">26 avril 2024</p>
          <h1 className="mt-11 text-center font-['Liberation_Serif',serif] text-[54px] leading-[64px] font-bold">
            Pyjama en soie : 5 bonnes raisons de l’adopter
          </h1>
          <section className="relative mt-[66px]">
            <div className="absolute bottom-full left-0 flex h-11 items-center gap-2 rounded-t-lg bg-[#3c6bc8] pr-5 pl-4 font-['Liberation_Sans',sans-serif] text-2xl text-white">
              <svg viewBox="0 0 20 20" className="size-5" fill="none" stroke="#b9cdf2" strokeWidth="2" aria-hidden="true">
                <path d="M1 7V1h6M13 1h6v6M19 13v6h-6M7 19H1v-6" />
              </svg>
              Content text
            </div>
            <p>
              Découvrez pourquoi opter pour un pyjama en soie peut être une excellente idée ! Bien plus qu'un<br />
              simple luxe, la soie offre une multitude d'avantages souvent méconnus.&nbsp; En effet la soie ne fait pas que<br />
              rendre vos vêtements de nuit plus élégants, elle apporte également des bienfaits souvent ignorés pour<br />
              votre peau et votre bien-être.
            </p>
            <p className="mt-6">
              Alors que vous soyez débutant ou déjà fan de ce tissu, nous vous présentons cinq bonnes raisons de<br />
              vous laisser tenter par le confort et l'élégance d'un pyjama en soie !
            </p>
            <div className="pointer-events-none absolute inset-0 rounded-b-md border-4 border-[#588bf5]" />
            <BlockToolbar />
          </section>
          <h2 className="mt-[62px] font-['Liberation_Serif',serif] text-[45px] leading-[56px] font-bold">1 - Confort et sensation de luxe</h2>
          <p className="mt-[34px]">
            La première raison d'opter pour un <a href="#pyjama-femme" className="text-[#b3665a]">pyjama en soie pour femme</a> est le confort incomparable qu'il offre.<br />
            La soie est reconnue pour sa douceur et sa légèreté, ce qui crée une sensation de luxe dès que vous<br />
            l'enfilez. Contrairement à d'autres tissus, la soie épouse délicatement les contours de votre corps sans<br />
            vous serrer, vous permettant ainsi de bouger librement pendant votre sommeil.
          </p>
          <p className="mt-6">
            Se glisser dans un pyjama en soie est une expérience unique, vous enveloppant dans un cocon de<br />
            confort et de luxe dès que vous entrez en contact avec ce tissu délicat.
          </p>
        </article>
      </div>
    </main>
  );
}

export default function App() {
  return (
    <div className="flex h-screen flex-col overflow-hidden bg-white font-[Inter,sans-serif]">
      <BrowserBar />
      <TabStrip />
      <EditorHeader />
      <div className="flex min-h-0 flex-1 shadow-[0_-1px_3px_rgba(0,0,0,0.3)]">
        <Rail />
        <SettingsPanel />
        <Preview />
      </div>
    </div>
  );
}
